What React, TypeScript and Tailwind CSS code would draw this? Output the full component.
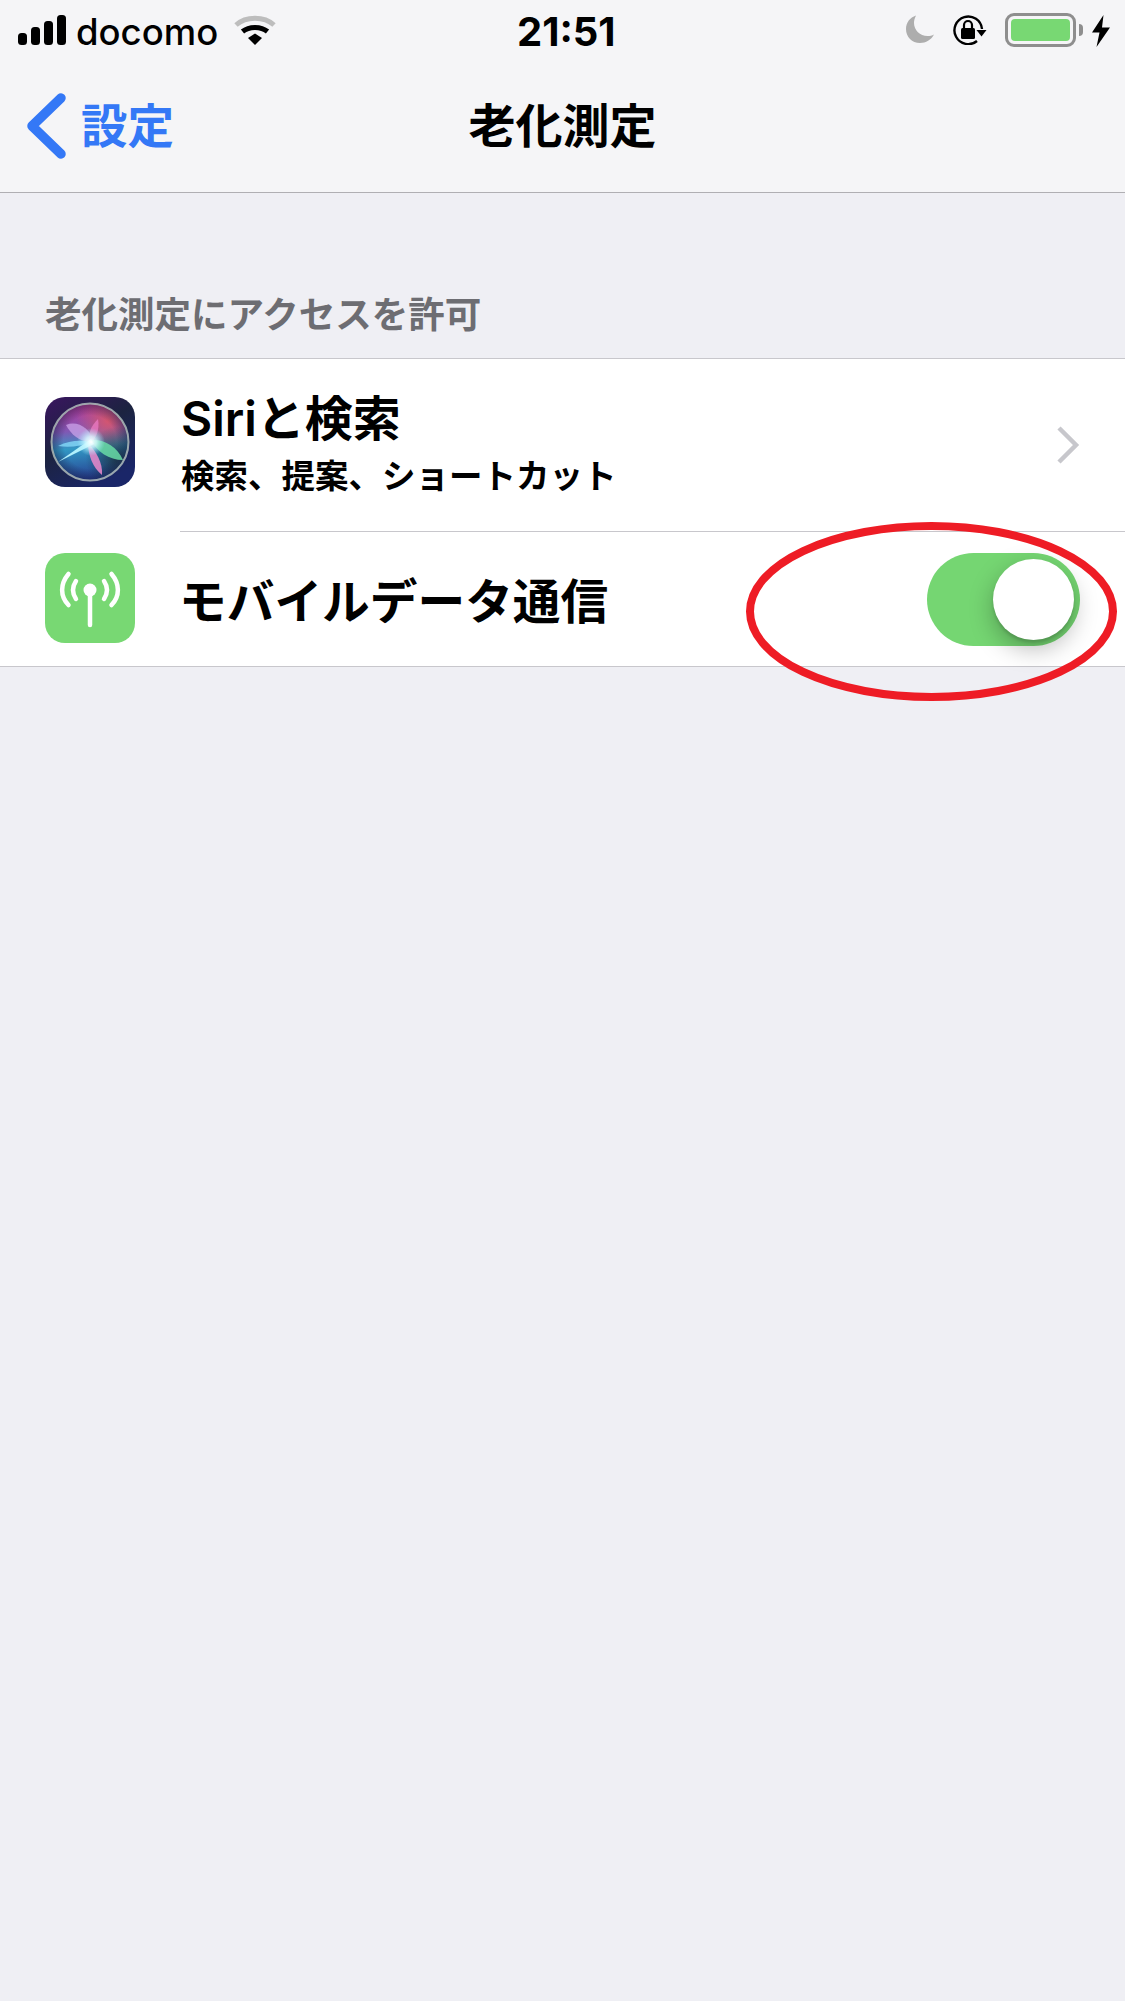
const JP = "font-['Inter','Noto_Sans_CJK_JP',sans-serif]";

const SignalBars = () => (
  <svg width="48" height="30" viewBox="0 0 48 30" className="block">
    <rect x="0" y="18" width="9" height="12" rx="3.500" fill="#000" />
    <rect x="13" y="12" width="9" height="18" rx="3.500" fill="#000" />
    <rect x="26" y="6" width="9" height="24" rx="3.500" fill="#000" />
    <rect x="39" y="0" width="9" height="30" rx="3.500" fill="#000" />
  </svg>
);

const Wifi = () => (
  <svg width="42" height="30" viewBox="0 0 42 30" className="block">
    <path d="M2 10 C12 1 30 1 40 10" fill="none" stroke="#bdbdbd" strokeWidth="5" />
    <path d="M8.500 16.500 C15 11 27 11 33.500 16.500" fill="none" stroke="#000" strokeWidth="5" />
    <path d="M14 23 L21 18.500 L28 23 L21 30 Z" fill="#000" />
  </svg>
);

const Moon = () => (
  <svg width="28" height="28" viewBox="0 0 28 28" className="block">
    <path d="M10 0.500 C4 2.500 0 7.500 0 14 C0 22 6 28 14 28 C20 28 25 25 28 19.500 C26 20.500 24 21 21.500 21 C14 21 8 15 8 8 C8 5.500 8.700 3 10 0.500 Z" fill="#adadad" />
  </svg>
);

const RotationLock = () => (
  <svg width="34" height="30" viewBox="0 0 34 30" className="block">
    <path d="M29 14 A13.800 13.800 0 1 0 24 26" fill="none" stroke="#000" strokeWidth="2.400" />
    <path d="M23.500 15 L33.500 15 L28.500 21.500 Z" fill="#000" />
    <rect x="8" y="13" width="14" height="11" rx="1.500" fill="#000" />
    <path d="M11 13 V10 A4 4 0 0 1 19 10 V13" fill="none" stroke="#000" strokeWidth="2.200" />
  </svg>
);

const Battery = () => (
  <div className="flex items-center gap-[3px]">
    <div className="w-[71px] h-[34px] rounded-[9px] border-[3px] border-[#8e8e8e] p-[3px]">
      <div className="w-full h-full rounded-[4px] bg-[#78d873]" />
    </div>
    <div className="w-[4px] h-[12px] rounded-r-[4px] bg-[#8e8e8e]" />
  </div>
);

const Bolt = () => (
  <svg width="18" height="32" viewBox="0 0 18 32" className="block">
    <path d="M11.500 0 L0 17.500 L7.500 17.500 L4.500 32 L18 12.500 L10 12.500 Z" fill="#000" />
  </svg>
);

const SiriIcon = () => (
  <svg width="90" height="90" viewBox="0 0 90 90" className="block">
    <defs>
      <linearGradient id="siriBg" x1="0" y1="0" x2="0.6" y2="1">
        <stop offset="0" stopColor="#3a1560" />
        <stop offset="0.5" stopColor="#1c2340" />
        <stop offset="1" stopColor="#1a2668" />
      </linearGradient>
      <linearGradient id="siriBall" x1="0.3" y1="0" x2="0.4" y2="1">
        <stop offset="0" stopColor="#ba3696" />
        <stop offset="0.35" stopColor="#8058b4" />
        <stop offset="0.58" stopColor="#3298c4" />
        <stop offset="1" stopColor="#263c90" />
      </linearGradient>
      <radialGradient id="siriRed" cx="0.74" cy="0.22" r="0.42">
        <stop offset="0" stopColor="#d9566c" stopOpacity="0.95" />
        <stop offset="1" stopColor="#d9566c" stopOpacity="0" />
      </radialGradient>
      <radialGradient id="siriDark" cx="0.86" cy="0.72" r="0.42">
        <stop offset="0" stopColor="#1c3644" stopOpacity="0.9" />
        <stop offset="1" stopColor="#1c3644" stopOpacity="0" />
      </radialGradient>
      <radialGradient id="siriEdge" cx="0.5" cy="0.5" r="0.5">
        <stop offset="0.7" stopColor="#141a40" stopOpacity="0" />
        <stop offset="1" stopColor="#141a40" stopOpacity="0.45" />
      </radialGradient>
      <radialGradient id="siriGlow" cx="0.5" cy="0.5" r="0.5">
        <stop offset="0" stopColor="#ffffff" />
        <stop offset="0.4" stopColor="#d6fbff" stopOpacity="0.8" />
        <stop offset="1" stopColor="#9fe9ff" stopOpacity="0" />
      </radialGradient>
    </defs>
    <rect width="90" height="90" rx="20" fill="url(#siriBg)" />
    <circle cx="45" cy="45" r="38" fill="url(#siriBall)" />
    <circle cx="45" cy="45" r="38" fill="url(#siriRed)" />
    <circle cx="45" cy="45" r="38" fill="url(#siriDark)" />
    <circle cx="45" cy="45" r="38" fill="url(#siriEdge)" />
    <circle cx="45" cy="45" r="38.500" fill="none" stroke="#b9c7c2" strokeOpacity="0.8" strokeWidth="2" />
    <path d="M21 28 C33 23 45 32 49 44 C37 47 27 39 21 28 Z" fill="#d0a8ec" fillOpacity="0.7" />
    <path d="M53 22 C55 33 51 41 46 46 C42 37 46 29 53 22 Z" fill="#e878c0" fillOpacity="0.8" />
    <path d="M46 43 C59 42 72 49 78 63 C64 63 52 55 46 43 Z" fill="#68dca6" fillOpacity="0.85" />
    <path d="M43 46 C51 54 58 66 57 78 C48 71 43 58 43 46 Z" fill="#ec8acc" fillOpacity="0.85" />
    <path d="M13 65 L46 42 L49 47 Z" fill="#b8f6ff" fillOpacity="0.95" />
    <path d="M13 49 C25 43 36 43 46 45 C36 49 25 51 13 49 Z" fill="#8ce4ff" fillOpacity="0.7" />
    <circle cx="46" cy="45" r="14" fill="url(#siriGlow)" />
  </svg>
);

const AntennaIcon = () => (
  <div className="w-[90px] h-[90px] rounded-[20px] bg-[#78d873] flex items-center justify-center">
    <svg width="90" height="90" viewBox="0 0 90 90" className="block">
      <circle cx="45" cy="37" r="6.500" fill="#fff" />
      <path d="M45 38 V72" stroke="#fff" strokeWidth="4.500" strokeLinecap="round" />
      <path d="M31 28 C27 34 27 40 31 46 M59 28 C63 34 63 40 59 46" fill="none" stroke="#fff" strokeWidth="4.500" strokeLinecap="round" />
      <path d="M23.500 21 C15 31 15 43 23.500 52 M66.500 21 C75 31 75 43 66.500 52" fill="none" stroke="#fff" strokeWidth="4.500" strokeLinecap="round" />
    </svg>
  </div>
);

const Toggle = () => (
  <div className="relative w-[153px] h-[93px] rounded-full bg-[#75d672] flex items-center justify-end pr-[6px]">
    <div className="w-[81px] h-[81px] rounded-full bg-white shadow-[0_9px_24px_rgba(0,0,0,0.28),0_3px_3px_rgba(0,0,0,0.12)]" />
  </div>
);

export default function App() {
  return (
    <div className={`relative w-[1125px] h-[2001px] overflow-hidden bg-[#efeff4] text-black ${JP}`}>
      <header className="bg-[#f5f5f7] border-b border-[#b0afb3]">
        <div className="h-[60px] relative flex items-start justify-between pl-[18px] pr-[15px] pt-[15px]">
          <div className="flex items-start">
            <SignalBars />
            <span className="ml-[10px] -mt-[3px] text-[36.500px] leading-[40px] font-medium font-['Inter',sans-serif]">docomo</span>
            <div className="ml-[16px]"><Wifi /></div>
          </div>
          <span className="absolute left-[517px] top-[12px] text-[40px] leading-[40px] font-bold font-['Inter',sans-serif]">21:51</span>
          <div className="flex items-start">
            <Moon />
            <div className="ml-[19px]"><RotationLock /></div>
            <div className="ml-[18px] -mt-[2px]"><Battery /></div>
            <div className="ml-[9px]"><Bolt /></div>
          </div>
        </div>
        <div className="relative h-[132px] flex items-center justify-center">
          <div className="absolute left-[27px] top-[33px] flex items-center">
            <svg width="40" height="66" viewBox="0 0 40 66" className="block">
              <path d="M34 5 L5 33 L34 61" fill="none" stroke="#3478f6" strokeWidth="9.500" strokeLinecap="round" strokeLinejoin="round" />
            </svg>
            <span className="ml-[14px] text-[46.500px] leading-[60px] font-bold text-[#3478f6]">設定</span>
          </div>
          <span className="text-[47px] leading-[60px] font-bold">老化測定</span>
        </div>
      </header>

      <div className="h-[165px] flex items-end pl-[45px] pb-[21px]">
        <span className="text-[36.500px] leading-[44px] font-bold text-[#6d6d72]">老化測定にアクセスを許可</span>
      </div>

      <div className="bg-white border-y border-[#c8c7cc]">
        <div className="h-[172px] flex items-center pl-[45px] pr-[45px]">
          <div className="-mt-[6px]"><SiriIcon /></div>
          <div className="ml-[46px] flex-1 flex flex-col -mt-[3px]">
            <span className="text-[48px] leading-[60px] font-semibold">Siriと検索</span>
            <span className="text-[33.500px] leading-[44px] font-bold mt-[5px]">検索、提案、ショートカット</span>
          </div>
          <svg width="24" height="38" viewBox="0 0 24 38" className="block">
            <path d="M3 2 L20 19 L3 36" fill="none" stroke="#c7c7cc" strokeWidth="4.500" />
          </svg>
        </div>
        <div className="ml-[180px] h-px bg-[#c8c7cc]" />
        <div className="h-[134px] flex items-center pl-[45px] pr-[45px]">
          <div className="-mt-[2px]"><AntennaIcon /></div>
          <span className="ml-[44px] flex-1 text-[47.700px] leading-[60px] font-semibold pt-[6px]">モバイルデータ通信</span>
          <Toggle />
        </div>
      </div>

      <svg width="379" height="187" viewBox="0 0 379 187" className="absolute left-[742px] top-[518px]">
        <ellipse cx="189.500" cy="93.500" rx="181.500" ry="85.500" fill="none" stroke="#ee1c25" strokeWidth="8" />
      </svg>
    </div>
  );
}
